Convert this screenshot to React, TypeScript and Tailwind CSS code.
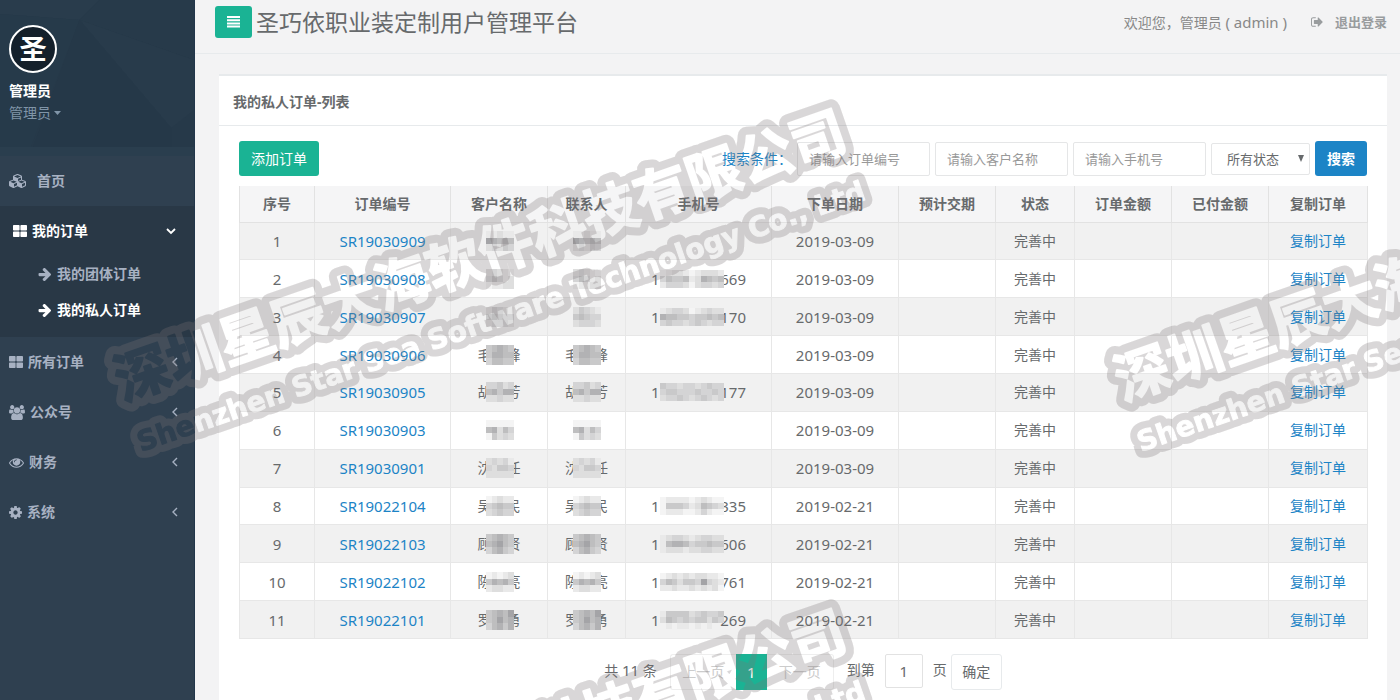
import React, { useState, type ReactNode } from "react";
import clsx from "clsx";

const ICONS = {
    cubes: {
        box: "0 0 2304 1792",
        d: "M640 1632l384-192v-314l-384 164v342zm-64-454l404-173-404-173-404 173zm1088 454l384-192v-314l-384 164v342zm-64-454l404-173-404-173-404 173zm-448-293l384-165v-266l-384 164v267zm-64-379l441-189-441-189-441 189zm1088 518v416q0 36-19 67t-52 47l-448 224q-25 14-57 14t-57-14l-448-224q-4-2-7-4-2 2-7 4l-448 224q-25 14-57 14t-57-14l-448-224q-33-16-52-47t-19-67v-416q0-38 21.5-70t56.5-48l434-186v-400q0-38 21.5-70t56.5-48l448-192q23-10 50-10t50 10l448 192q35 16 56.5 48t21.5 70v400l434 186q36 16 57 48t21 70z",
    },
    users: {
        box: "0 0 1920 1792",
        d: "M593 896q-162 5-265 128h-134q-82 0-138-40.5t-56-118.5q0-353 124-353 6 0 43.5 21t97.5 42.5 119 21.5q67 0 133-23-5 37-5 66 0 139 81 256zm1071 637q0 120-73 189.5t-194 69.5h-874q-121 0-194-69.5t-73-189.5q0-53 3.5-103.5t14-109 26.5-108.5 43-97.5 62-81 85.5-53.5 111.5-20q10 0 43 21.5t73 48 107 48 135 21.5 135-21.5 107-48 73-48 43-21.5q61 0 111.5 20t85.5 53.5 62 81 43 97.5 26.5 108.5 14 109 3.5 103.5zm-1024-1277q0 106-75 181t-181 75-181-75-75-181 75-181 181-75 181 75 75 181zm704 384q0 159-112.5 271.5t-271.5 112.5-271.5-112.5-112.5-271.5 112.5-271.5 271.5-112.5 271.5 112.5 112.5 271.5zm576 225q0 78-56 118.5t-138 40.5h-134q-103-123-265-128 81-117 81-256 0-29-5-66 66 23 133 23 59 0 119-21.5t97.5-42.5 43.5-21q124 0 124 353zm-128-609q0 106-75 181t-181 75-181-75-75-181 75-181 181-75 181 75 75 181z",
    },
    eye: {
        box: "0 0 1792 1792",
        d: "M1664 960q-152-236-381-353 61 104 61 225 0 185-131.5 316.5t-316.5 131.5-316.5-131.5-131.5-316.5q0-121 61-225-229 117-381 353 133 205 333.5 326.5t434.5 121.5 434.5-121.5 333.5-326.5zm-720-384q0-20-14-34t-34-14q-125 0-214.5 89.5t-89.5 214.5q0 20 14 34t34 14 34-14 14-34q0-86 61-147t147-61q20 0 34-14t14-34zm848 384q0 34-20 69-140 230-376.5 368.5t-499.5 138.5-499.5-139-376.5-368q-20-35-20-69t20-69q140-229 376.5-368t499.5-139 499.5 139 376.5 368q20 35 20 69z",
    },
    cog: {
        box: "128 128 1536 1536",
        d: "M1152 896q0-106-75-181t-181-75-181 75-75 181 75 181 181 75 181-75 75-181zm512-109v222q0 12-8 23t-20 13l-185 28q-19 54-39 91 35 50 107 138 10 12 10 25t-9 23q-27 37-99 108t-94 71q-12 0-26-9l-138-108q-44 23-91 38-16 136-29 186-7 28-36 28h-222q-14 0-24.5-8.5t-11.5-21.5l-28-184q-49-16-90-37l-141 107q-10 9-25 9-14 0-25-11-126-114-165-168-7-10-7-23 0-12 8-23 15-21 51-66.5t54-70.5q-27-50-41-99l-183-27q-13-2-21-12.5t-8-23.5v-222q0-12 8-23t19-13l186-28q14-46 39-92-40-57-107-138-10-12-10-24 0-10 9-23 26-36 98.5-107.5t94.5-71.5q13 0 26 10l138 107q44-23 91-38 16-136 29-186 7-28 36-28h222q14 0 24.5 8.5t11.5 21.5l28 184q49 16 90 37l142-107q9-9 24-9 13 0 25 10 129 119 165 170 7 8 7 22 0 12-8 23-15 21-51 66.5t-54 70.5q26 50 41 98l183 28q13 2 21 12.5t8 23.5z",
    },
    large: {
        box: "0 0 14 12",
        d: "M.8 0h5a.8.8 0 0 1 .8.8v4a.8.8 0 0 1-.8.8h-5a.8.8 0 0 1-.8-.8v-4a.8.8 0 0 1 .8-.8zM8.200 0h5a.8.8 0 0 1 .8.8v4a.8.8 0 0 1-.8.8h-5a.8.8 0 0 1-.8-.8v-4a.8.8 0 0 1 .8-.8zM.8 6.400h5a.8.8 0 0 1 .8.8v4a.8.8 0 0 1-.8.8h-5a.8.8 0 0 1-.8-.8v-4a.8.8 0 0 1 .8-.8zM8.200 6.400h5a.8.8 0 0 1 .8.8v4a.8.8 0 0 1-.8.8h-5a.8.8 0 0 1-.8-.8v-4a.8.8 0 0 1 .8-.8z",
    },
    arrow: {
        box: "64 192 1536 1536",
        d: "M1600 960q0 54-37 91l-651 651q-39 37-91 37-51 0-90-37l-75-75q-38-38-38-91t38-91l293-293h-704q-52 0-84.5-37.5t-32.5-90.5v-128q0-53 32.5-90.5t84.5-37.5h704l-293-294q-38-36-38-90t38-90l75-75q38-38 90-38 53 0 91 38l651 651q37 35 37 90z",
    },
    signOut: {
        box: "64 128 1600 1536",
        d: "M704 1440q0 4 1 20t.5 26.5-3 23.5-10 19.5-20.5 6.5h-320q-119 0-203.5-84.5t-84.5-203.5v-704q0-119 84.5-203.5t203.5-84.5h320q13 0 22.5 9.5t9.5 22.5q0 4 1 20t.5 26.5-3 23.5-10 19.5-20.5 6.5h-320q-66 0-113 47t-47 113v704q0 66 47 113t113 47h312l11.5 1 11.5 3 8 5.5 7 9 2 13.5zm928-544q0 26-19 45l-544 544q-19 19-45 19t-45-19-19-45v-288h-448q-26 0-45-19t-19-45v-384q0-26 19-45t45-19h448v-288q0-26 19-45t45-19 45 19l544 544q19 19 19 45z",
    },
    bars: {
        box: "0 0 13 12",
        d: "M0 0h13v2H0zM0 3.200h13v2H0zM0 6.400h13v2H0zM0 9.600h13v2H0z",
    },
};

type IconName = keyof typeof ICONS;

const Icon = ({
    name,
    className,
}: {
    name: IconName;
    className: string;
}): ReactNode => (
    <svg
        viewBox={ICONS[name].box}
        fill="currentColor"
        aria-hidden="true"
        className={clsx("shrink-0", className)}
    >
        <path d={ICONS[name].d} />
    </svg>
);

const Angle = ({ open }: { open?: boolean }): ReactNode => (
    <svg
        viewBox="0 0 10 10"
        fill="none"
        stroke="currentColor"
        strokeWidth={open ? 1.8 : 1.4}
        aria-hidden="true"
        className="ml-auto size-[10px] shrink-0"
    >
        <path d={open ? "M1 3l4 4 4-4" : "M7 1L3 5l4 4"} />
    </svg>
);

// Each digit is a grey level, 0 is transparent.
const SHADES = [
    "transparent",
    "#f4f4f4",
    "#e9e9e9",
    "#dedede",
    "#d4d4d5",
    "#c9c9ca",
    "#bebebf",
    "#b2b2b4",
    "#a4a4a7",
];

const Mosaic = ({
    rows,
    className,
}: {
    rows: string[];
    className: string;
}): ReactNode => (
    <svg
        viewBox={`0 0 ${rows[0].length} ${rows.length}`}
        preserveAspectRatio="none"
        shapeRendering="crispEdges"
        aria-hidden="true"
        className={className}
    >
        {rows.map((row, y) =>
            row
                .split("")
                .map((shade, x) => (
                    <rect
                        key={`${x}-${y}`}
                        x={x}
                        y={y}
                        width={1}
                        height={1}
                        fill={SHADES[Number(shade)]}
                    />
                ))
        )}
    </svg>
);

const NAME_MASKS = [
    ["22322", "87676", "34354"],
    ["34321", "46423", "12233"],
    ["35432", "56544", "34443"],
    ["56765", "57766", "46655"],
    ["44534", "67577", "33433"],
    ["11111", "67364", "15343"],
    ["34342", "43554", "33333"],
    ["12322", "45655", "34544"],
    ["56765", "67865", "46754"],
    ["12123", "57675", "23322"],
    ["56768", "56867", "46757"],
];

const PHONE_MASKS: Record<number, string[]> = {
    2: ["12332123332", "46556237656", "24443134434"],
    3: ["23443123433", "76655455656", "45443454344"],
    5: ["54434434544", "45544454454", "34454345434"],
    8: ["12222123211", "15554236543", "12221124211"],
    9: ["23443234433", "26776455655", "23332334433"],
    10: ["12323233221", "46535548432", "22322323231"],
    11: ["25555345445", "36545455354", "02022020200"],
};

type Order = {
    code: string;
    first?: string;
    last?: string;
    phoneEnd?: string;
    date: string;
};

const ORDERS: Order[] = [
    { code: "SR19030909", date: "2019-03-09" },
    { code: "SR19030908", phoneEnd: "669", date: "2019-03-09" },
    { code: "SR19030907", phoneEnd: "170", date: "2019-03-09" },
    { code: "SR19030906", first: "毛", last: "峰", date: "2019-03-09" },
    {
        code: "SR19030905",
        first: "胡",
        last: "芳",
        phoneEnd: "177",
        date: "2019-03-09",
    },
    { code: "SR19030903", date: "2019-03-09" },
    { code: "SR19030901", first: "沈", last: "任", date: "2019-03-09" },
    {
        code: "SR19022104",
        first: "吴",
        last: "民",
        phoneEnd: "335",
        date: "2019-02-21",
    },
    {
        code: "SR19022103",
        first: "顾",
        last: "贤",
        phoneEnd: "606",
        date: "2019-02-21",
    },
    {
        code: "SR19022102",
        first: "陈",
        last: "亮",
        phoneEnd: "761",
        date: "2019-02-21",
    },
    {
        code: "SR19022101",
        first: "罗",
        last: "勇",
        phoneEnd: "269",
        date: "2019-02-21",
    },
];

const COLUMNS = [
    { label: "序号", width: "w-[75px]" },
    { label: "订单编号", width: "w-[136px]" },
    { label: "客户名称", width: "w-[97px]" },
    { label: "联系人", width: "w-[78px]" },
    { label: "手机号", width: "w-[146px]" },
    { label: "下单日期", width: "w-[127px]" },
    { label: "预计交期", width: "w-[97px]" },
    { label: "状态", width: "w-[79px]" },
    { label: "订单金额", width: "w-[97px]" },
    { label: "已付金额", width: "w-[97px]" },
    { label: "复制订单", width: "w-[99px]" },
];

const MaskedName = ({
    order,
    index,
}: {
    order: Order;
    index: number;
}): ReactNode => (
    <div className="relative mx-auto flex h-5 w-[43px] items-center justify-between">
        <span>{order.first}</span>
        <span>{order.last}</span>
        <Mosaic
            rows={NAME_MASKS[index]}
            className="absolute top-0 left-2 h-5 w-7"
        />
    </div>
);

const MaskedPhone = ({
    order,
    index,
}: {
    order: Order;
    index: number;
}): ReactNode => {
    if (!order.phoneEnd) {
        return null;
    }
    return (
        <div className="relative mx-auto flex h-5 w-[95px] items-center justify-between">
            <span>1</span>
            <span>{order.phoneEnd}</span>
            <Mosaic
                rows={PHONE_MASKS[index + 1]}
                className="absolute top-px left-[9px] h-[18px] w-[64px]"
            />
        </div>
    );
};

const OrderTable = (): ReactNode => (
    <table className="mt-[10px] h-[453px] w-full table-fixed border-collapse text-center">
        <thead>
            <tr className="h-9 bg-[#f5f5f6]">
                {COLUMNS.map((c) => (
                    <th
                        key={c.label}
                        scope="col"
                        className={clsx(
                            "border-x border-b border-[#e2e2e2] p-0 font-bold",
                            c.width
                        )}
                    >
                        {c.label}
                    </th>
                ))}
            </tr>
        </thead>
        <tbody>
            {ORDERS.map((order, i) => (
                <tr
                    key={order.code}
                    className="h-9 odd:bg-[#f1f1f1] [&>td]:border [&>td]:border-[#e7e7e7] [&>td]:p-0"
                >
                    <td className="text-[15px]">{i + 1}</td>
                    <td className="text-[15px]">
                        <a href="#order" className="text-[#1c84c6]">
                            {order.code}
                        </a>
                    </td>
                    <td>
                        <MaskedName order={order} index={i} />
                    </td>
                    <td>
                        <MaskedName order={order} index={i} />
                    </td>
                    <td className="text-[15px]">
                        <MaskedPhone order={order} index={i} />
                    </td>
                    <td className="text-[15px]">{order.date}</td>
                    <td />
                    <td>完善中</td>
                    <td />
                    <td />
                    <td>
                        <a href="#copy" className="text-[#1c84c6]">
                            复制订单
                        </a>
                    </td>
                </tr>
            ))}
        </tbody>
    </table>
);

const SearchInput = ({ label }: { label: string }): ReactNode => (
    <input
        type="text"
        aria-label={label}
        placeholder={label}
        className="h-[34px] w-[133px] rounded-[2px] border border-[#e5e6e7] bg-transparent px-[11px] text-[13px] placeholder:text-[#999999]"
    />
);

const Toolbar = (): ReactNode => (
    <div className="flex items-center justify-between">
        <button
            type="button"
            className="h-[35px] rounded-[3px] bg-[#1ab394] px-3 text-white"
        >
            添加订单
        </button>
        <form
            className="flex items-center gap-[5px]"
            onSubmit={(e) => e.preventDefault()}
        >
            <span className="text-[#1c84c6]">搜索条件：</span>
            <SearchInput label="请输入订单编号" />
            <SearchInput label="请输入客户名称" />
            <SearchInput label="请输入手机号" />
            <div className="relative">
                <select
                    aria-label="订单状态"
                    className="h-[32px] w-[99px] appearance-none rounded-[2px] border border-[#e5e6e7] bg-transparent pl-[15px] text-[13px]"
                >
                    <option>所有状态</option>
                    <option>完善中</option>
                </select>
                <svg
                    viewBox="0 0 6 7"
                    fill="currentColor"
                    aria-hidden="true"
                    className="pointer-events-none absolute top-3 right-[6px] h-[7px] w-[6px]"
                >
                    <path d="M0 0h6L3 7z" />
                </svg>
            </div>
            <button
                type="submit"
                className="h-[35px] rounded-[3px] bg-[#1c84c6] px-3 font-bold text-white"
            >
                搜索
            </button>
        </form>
    </div>
);

const Pagination = (): ReactNode => (
    <nav
        aria-label="分页"
        className="mt-[15px] flex items-start justify-center leading-8"
    >
        <span className="mr-[13px]">
            共 <span className="text-[15px]">11</span> 条
        </span>
        <button
            type="button"
            disabled
            className="h-9 w-[66px] rounded-l-[3px] border border-r-0 border-[#eeeeee] text-[#cccccc]"
        >
            上一页
        </button>
        <button
            type="button"
            aria-current="page"
            className="h-9 w-[31px] bg-[#1ab394] text-[15px] text-white"
        >
            1
        </button>
        <button
            type="button"
            disabled
            className="h-9 w-[67px] rounded-r-[3px] border border-l-0 border-[#eeeeee] text-[#cccccc]"
        >
            下一页
        </button>
        <label htmlFor="page" className="ml-[13px]">
            到第
        </label>
        <input
            id="page"
            type="text"
            defaultValue="1"
            className="mx-[10px] h-[34px] w-[38px] rounded-[2px] border border-[#e2e2e2] text-center text-[15px]"
        />
        <span>页</span>
        <button
            type="button"
            className="ml-1 h-9 w-[51px] rounded-[3px] border border-[#e7eaec]"
        >
            确定
        </button>
    </nav>
);

const NavItem = ({
    icon,
    size,
    label,
}: {
    icon: IconName;
    size: string;
    label: string;
}): ReactNode => (
    <li>
        <a
            href="#menu"
            className="flex h-[50px] items-center gap-[5px] pr-[14px] pl-[9px] font-bold"
        >
            <Icon name={icon} className={size} />
            {label}
            <Angle />
        </a>
    </li>
);

const Profile = (): ReactNode => (
    <div className="relative h-[156px] overflow-hidden bg-[#263949] pt-[25px] pl-[9px]">
        <svg
            viewBox="0 0 195 156"
            preserveAspectRatio="none"
            aria-hidden="true"
            className="absolute inset-0 size-full"
        >
            <path d="M0 0h100L80 20 0 14z" fill="#293c4c" />
            <path d="M80 20L195 60V0h-95z" fill="#273a4a" />
            <path d="M80 20l92 108L195 110V60z" fill="#283b4b" />
            <path d="M0 14l80 6-50 130H0z" fill="#263a4a" />
            <path d="M80 20l92 108v28H30z" fill="#253848" />
            <path d="M0 147h195v9H0z" fill="#2a3e4e" />
        </svg>
        <div className="relative">
            <div className="flex size-12 items-center justify-center rounded-full border-2 border-white bg-[#14202b] text-[27px] font-bold text-white">
                圣
            </div>
            <p className="mt-[7px] leading-[22px] font-bold text-white">
                管理员
            </p>
            <button
                type="button"
                className="flex items-center gap-[3px] leading-[22px] text-[#8095a8]"
            >
                管理员
                <svg
                    viewBox="0 0 7 4"
                    fill="currentColor"
                    aria-hidden="true"
                    className="h-1 w-[7px]"
                >
                    <path d="M0 0h7L3.500 4z" />
                </svg>
            </button>
        </div>
    </div>
);

const Sidebar = (): ReactNode => (
    <aside className="w-[195px] shrink-0 border-r border-[#22364a] bg-[#2f4050] text-[#a7b1c2]">
        <Profile />
        <ul>
            <li>
                <a
                    href="#home"
                    className="flex h-[50px] items-center gap-[10px] pl-[9px] font-bold"
                >
                    <Icon name="cubes" className="h-[14px] w-[18px]" />
                    首页
                </a>
            </li>
            <li className="bg-[#293846] pb-[9px]">
                <a
                    href="#mine"
                    className="flex h-[50px] items-center gap-[5px] pr-[18px] pl-[13px] font-bold text-white"
                >
                    <Icon name="large" className="h-3 w-[14px]" />
                    我的订单
                    <Angle open />
                </a>
                <ul>
                    <li>
                        <a
                            href="#group"
                            className="flex h-9 items-center gap-[6px] pl-[38px] font-bold"
                        >
                            <Icon name="arrow" className="size-[13px]" />
                            我的团体订单
                        </a>
                    </li>
                    <li>
                        <a
                            href="#private"
                            className="flex h-9 items-center gap-[6px] pl-[38px] font-bold text-white"
                        >
                            <Icon name="arrow" className="size-[13px]" />
                            我的私人订单
                        </a>
                    </li>
                </ul>
            </li>
            <NavItem icon="large" size="h-3 w-[14px]" label="所有订单" />
            <NavItem icon="users" size="h-[15px] w-4" label="公众号" />
            <NavItem icon="eye" size="size-[15px]" label="财务" />
            <NavItem icon="cog" size="size-[13px]" label="系统" />
        </ul>
    </aside>
);

const Header = ({ onToggle }: { onToggle: () => void }): ReactNode => (
    <header className="flex h-[54px] items-start justify-between border-b border-[#e7eaec] pt-[6px] pr-[13px] pl-5">
        <div className="flex items-center gap-1">
            <button
                type="button"
                aria-label="菜单"
                onClick={onToggle}
                className="flex h-8 w-[37px] items-center justify-center rounded-[3px] bg-[#1ab394] text-white"
            >
                <Icon name="bars" className="h-3 w-[13px]" />
            </button>
            <h1 className="text-[23px] leading-8">
                圣巧依职业装定制用户管理平台
            </h1>
        </div>
        <div className="flex h-8 items-center text-[#888888]">
            <span className="mr-6">
                欢迎您，管理员{" "}
                <span className="text-[15px]">( admin )</span>
            </span>
            <a
                href="#logout"
                className="flex items-center gap-3 text-[13px] font-bold text-[#999c9e]"
            >
                <Icon name="signOut" className="size-3" />
                退出登录
            </a>
        </div>
    </header>
);

const MARKS = [
    [0, 0],
    [1000, 0],
    [0, 500],
];

const WatermarkChinese = (): ReactNode => (
    <text
        transform="translate(123 401) rotate(-19.2)"
        fontSize="55"
        fontWeight="700"
    >
        深圳星辰大海软件科技有限公司
    </text>
);

const WatermarkEnglish = (): ReactNode => (
    <text
        transform="translate(141 452) rotate(-19.2)"
        fontFamily="DejaVu Sans, sans-serif"
        fontSize="28"
        fontWeight="700"
    >
        Shenzhen Star Sea Software Technology Co., Ltd
    </text>
);

// The letters are cut out of a wide grey outline, so the page shows through.
const Watermark = (): ReactNode => (
    <svg
        aria-hidden="true"
        className="pointer-events-none absolute inset-0 size-full"
    >
        <mask
            id="cutout"
            maskUnits="userSpaceOnUse"
            x="0"
            y="0"
            width="100%"
            height="100%"
        >
            {MARKS.map(([x, y]) => (
                <g
                    key={`${x}-${y}`}
                    transform={`translate(${x} ${y})`}
                    strokeLinejoin="round"
                >
                    <g fill="white" stroke="white">
                        <g strokeWidth="18">
                            <WatermarkChinese />
                        </g>
                        <g strokeWidth="15">
                            <WatermarkEnglish />
                        </g>
                    </g>
                    <g fill="black" stroke="black">
                        <g strokeWidth="2">
                            <WatermarkChinese />
                        </g>
                        <WatermarkEnglish />
                    </g>
                </g>
            ))}
        </mask>
        <rect
            width="100%"
            height="100%"
            fill="#7b7375"
            opacity="0.28"
            mask="url(#cutout)"
        />
    </svg>
);

export default function App(): ReactNode {
    const [open, setOpen] = useState(true);

    return (
        <div className="relative flex min-h-screen overflow-hidden bg-[#f3f3f4] font-['Noto_Sans','Noto_Sans_CJK_SC',sans-serif] text-[14px] leading-5 text-[#676a6c]">
            {open && <Sidebar />}
            <div className="min-w-0 flex-1">
                <Header onToggle={() => setOpen(!open)} />
                <main className="mt-5 mr-[13px] ml-6 border-t-2 border-[#e7eaec] bg-white">
                    <h2 className="border-b border-[#e7eaec] px-[14px] pt-4 pb-[13px] font-bold">
                        我的私人订单-列表
                    </h2>
                    <div className="px-5 pt-[15px] pb-[10px]">
                        <Toolbar />
                        <OrderTable />
                        <Pagination />
                    </div>
                </main>
            </div>
            <Watermark />
        </div>
    );
}
